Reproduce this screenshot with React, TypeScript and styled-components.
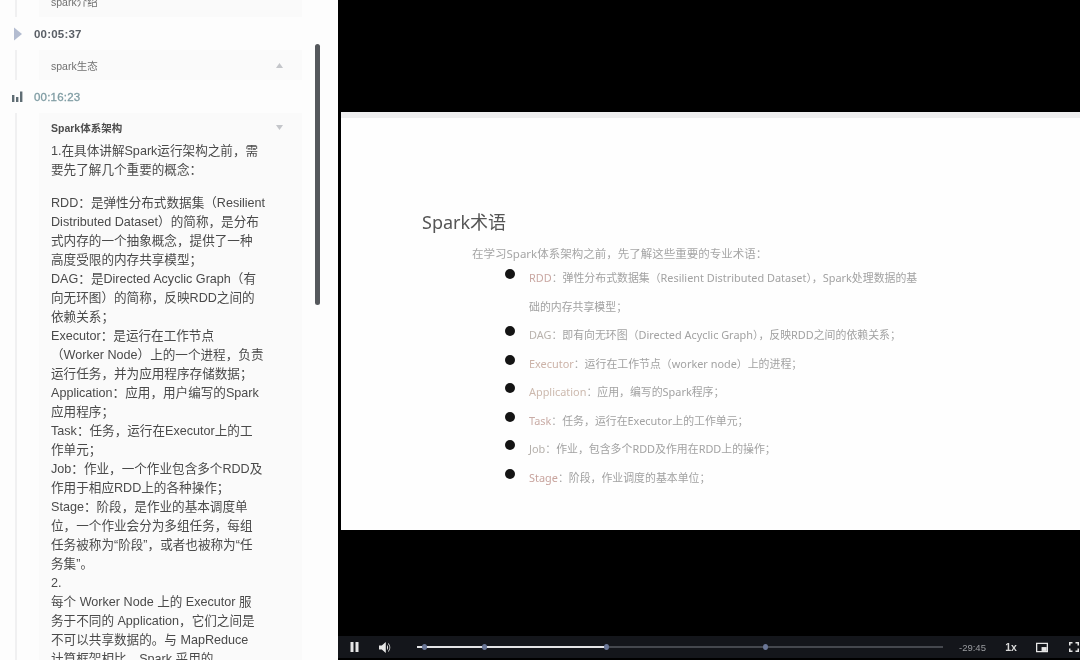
import React from 'react'
import styled, { createGlobalStyle } from 'styled-components'

const GlobalStyle = createGlobalStyle`
  html, body {
    margin: 0;
    padding: 0;
    width: 1080px;
    height: 660px;
    overflow: hidden;
    background: #fff;
  }
`

const Page = styled.div`
  display: grid;
  grid-template-columns: 338px 1fr;
  width: 1080px;
  height: 660px;
  overflow: hidden;
  filter: blur(0.45px);
  font-family: 'Liberation Sans', 'Noto Sans CJK SC', sans-serif;
`

const Sidebar = styled.aside`
  position: relative;
  height: 660px;
  overflow: hidden;
  background: #fdfdfd;
`

const Outline = styled.div`
  display: flex;
  flex-direction: column;
  margin-top: -14px;
`

const Chapter = styled.section`
  display: flex;
  flex-direction: column;
`

const TimeRow = styled.div`
  display: flex;
  align-items: center;
  height: 33px;
  padding-left: 11px;
`

const MarkerSlot = styled.span`
  display: flex;
  align-items: center;
  width: 23px;
`

const TimeText = styled.span<{ $active?: boolean }>`
  font-size: 11.5px;
  font-weight: ${p => (p.$active ? 400 : 700)};
  letter-spacing: 0.2px;
  color: ${p => (p.$active ? '#7f9ca3' : '#5a5f66')};
  -webkit-text-stroke: ${p => (p.$active ? '0.3px #7f9ca3' : '0')};
`

const Rail = styled.div`
  margin-left: 15px;
  padding-left: 22px;
  border-left: 2px solid #f0f0f1;
  width: 263px;
`

const Card = styled.div<{ $open?: boolean }>`
  background: #fafafa;
  padding: ${p => (p.$open ? '0 0 0 12px' : '0 0 0 12px')};
  width: 251px;
`

const CardHead = styled.div<{ $height: number }>`
  display: flex;
  align-items: center;
  justify-content: space-between;
  height: ${p => p.$height}px;
  padding-right: 19px;
`

const CardTitle = styled.span<{ $strong?: boolean }>`
  font-size: 10.5px;
  font-weight: ${p => (p.$strong ? 700 : 400)};
  color: ${p => (p.$strong ? '#4c4c4c' : '#707070')};
`

const Caret = styled.svg`
  width: 7px;
  height: 5px;
  fill: #c4c6ca;
`

const Notes = styled.div`
  font-size: 12.6px;
  line-height: 19px;
  color: #4a4a4a;
  white-space: nowrap;
`

const Block = styled.p`
  margin: 0 0 14px;
`

const ScrollThumb = styled.div`
  position: absolute;
  left: 315px;
  top: 44px;
  width: 5px;
  height: 261px;
  border-radius: 3px;
  background: #55585c;
`

const Player = styled.main`
  display: flex;
  flex-direction: column;
  height: 660px;
  background: #000;
`

const Letterbox = styled.div<{ $height: number }>`
  height: ${p => p.$height}px;
  flex: none;
  background: #000;
`

const Slide = styled.div`
  flex: none;
  height: 418px;
  margin: 0 2px 0 3px;
  padding: 92px 0 0 81px;
  box-sizing: border-box;
  background: #fefefe;
  border-top: 6px solid #eeeeef;
  font-family: 'Noto Sans', 'Noto Sans CJK SC', sans-serif;
`

const SlideTitle = styled.h1`
  margin: 0;
  font-size: 18px;
  line-height: 24px;
  font-weight: 400;
  color: #555;
`

const SlideIntro = styled.p`
  margin: 11px 0 0 50px;
  font-size: 11.5px;
  line-height: 18px;
  color: #a6a6a6;
`

const TermList = styled.ul`
  list-style: none;
  margin: 1px 0 0 107px;
  padding: 0;
  font-size: 10.9px;
  line-height: 28.5px;
  color: #a2a2a2;
  white-space: nowrap;
`

const Term = styled.li`
  position: relative;
  &::before {
    content: '';
    position: absolute;
    left: -24px;
    top: 5px;
    width: 10px;
    height: 10px;
    border-radius: 50%;
    background: #141414;
  }
`

const TermName = styled.span<{ $tone: string }>`
  color: ${p => p.$tone};
`

const Controls = styled.div`
  flex: none;
  display: flex;
  align-items: center;
  height: 22px;
  margin-bottom: 2px;
  padding-left: 10px;
  background: #14161b;
  color: #e8e8e8;
`

const IconSlot = styled.span<{ $width: number }>`
  display: flex;
  align-items: center;
  justify-content: center;
  flex: none;
  width: ${p => p.$width}px;
`

const ControlIcon = styled.svg`
  display: block;
  fill: #e6e6e6;
`

const Track = styled.div`
  position: relative;
  flex: none;
  width: 526px;
  height: 2px;
  margin-left: 7px;
  background: #45484e;
`

const Played = styled.div`
  height: 100%;
  background: #e4e4e6;
`

const Chapters = styled.span<{ $at: number }>`
  position: absolute;
  left: ${p => p.$at}px;
  top: -2px;
  width: 5px;
  height: 6px;
  border-radius: 50%;
  background: #6a7696;
`

const Remaining = styled.span`
  flex: none;
  margin-left: 16px;
  width: 27px;
  font-size: 9.5px;
  color: #9a9ca0;
`

const Speed = styled.span`
  flex: none;
  width: 50px;
  text-align: center;
  font-size: 10.5px;
  font-weight: 700;
  color: #d8d8d8;
`

const notes = [
  ['1.在具体讲解Spark运行架构之前，需', '要先了解几个重要的概念：'],
  [
    'RDD：是弹性分布式数据集（Resilient',
    'Distributed Dataset）的简称，是分布',
    '式内存的一个抽象概念，提供了一种',
    '高度受限的内存共享模型；',
    'DAG：是Directed Acyclic Graph（有',
    '向无环图）的简称，反映RDD之间的',
    '依赖关系；',
    'Executor：是运行在工作节点',
    '（Worker Node）上的一个进程，负责',
    '运行任务，并为应用程序存储数据；',
    'Application：应用，用户编写的Spark',
    '应用程序；',
    'Task：任务，运行在Executor上的工',
    '作单元；',
    'Job：作业，一个作业包含多个RDD及',
    '作用于相应RDD上的各种操作；',
    'Stage：阶段，是作业的基本调度单',
    '位，一个作业会分为多组任务，每组',
    '任务被称为“阶段”，或者也被称为“任',
    '务集”。',
    '2.',
    '每个 Worker Node 上的 Executor 服',
    '务于不同的 Application，它们之间是',
    '不可以共享数据的。与 MapReduce',
    '计算框架相比，Spark 采用的',
  ],
]

const terms = [
  { name: 'RDD', tone: '#c9a7a2', text: '：弹性分布式数据集（Resilient Distributed Dataset），Spark处理数据的基', more: '础的内存共享模型；' },
  { name: 'DAG', tone: '#b9b3ad', text: '：即有向无环图（Directed Acyclic Graph），反映RDD之间的依赖关系；' },
  { name: 'Executor', tone: '#ccb3a8', text: '：运行在工作节点（worker node）上的进程；' },
  { name: 'Application', tone: '#ccb9ae', text: '：应用，编写的Spark程序；' },
  { name: 'Task', tone: '#c9aca6', text: '：任务，运行在Executor上的工作单元；' },
  { name: 'Job', tone: '#b5b0ab', text: '：作业，包含多个RDD及作用在RDD上的操作；' },
  { name: 'Stage', tone: '#c8a49e', text: '：阶段，作业调度的基本单位；' },
]

const App = () => {
  return (
    <Page>
      <GlobalStyle />
      <Sidebar>
        <Outline>
          <Rail>
            <Card>
              <CardHead $height={31}>
                <CardTitle>spark介绍</CardTitle>
              </CardHead>
            </Card>
          </Rail>
          <Chapter>
            <TimeRow>
              <MarkerSlot>
                <svg width="12" height="14" viewBox="0 0 12 14">
                  <path d="M3 0.5 L11 7 L3 13.5 Z" fill="#b3bcd0" />
                </svg>
              </MarkerSlot>
              <TimeText>00:05:37</TimeText>
            </TimeRow>
            <Rail>
              <Card>
                <CardHead $height={30}>
                  <CardTitle>spark生态</CardTitle>
                  <Caret viewBox="0 0 7 5">
                    <path d="M3.5 0 L7 5 L0 5 Z" />
                  </Caret>
                </CardHead>
              </Card>
            </Rail>
          </Chapter>
          <Chapter>
            <TimeRow>
              <MarkerSlot>
                <svg width="12" height="11" viewBox="0 0 12 11">
                  <rect x="1" y="4" width="2.4" height="7" fill="#5f6d74" />
                  <rect x="5" y="6" width="2.4" height="5" fill="#5f6d74" />
                  <rect x="9" y="0.5" width="2.4" height="10.5" fill="#5f6d74" />
                </svg>
              </MarkerSlot>
              <TimeText $active>00:16:23</TimeText>
            </TimeRow>
            <Rail>
              <Card $open>
                <CardHead $height={29}>
                  <CardTitle $strong>Spark体系架构</CardTitle>
                  <Caret viewBox="0 0 7 5">
                    <path d="M0 0 L7 0 L3.5 5 Z" />
                  </Caret>
                </CardHead>
                <Notes>
                  {notes.map((block, i) => (
                    <Block key={i}>
                      {block.map((line, j) => (
                        <React.Fragment key={j}>
                          {line}
                          <br />
                        </React.Fragment>
                      ))}
                    </Block>
                  ))}
                </Notes>
              </Card>
            </Rail>
          </Chapter>
        </Outline>
        <ScrollThumb />
      </Sidebar>

      <Player>
        <Letterbox $height={112} />
        <Slide>
          <SlideTitle>Spark术语</SlideTitle>
          <SlideIntro>在学习Spark体系架构之前，先了解这些重要的专业术语：</SlideIntro>
          <TermList>
            {terms.map(t => (
              <Term key={t.name}>
                <TermName $tone={t.tone}>{t.name}</TermName>
                {t.text}
                {t.more && (
                  <>
                    <br />
                    {t.more}
                  </>
                )}
              </Term>
            ))}
          </TermList>
        </Slide>
        <Letterbox $height={106} />
        <Controls>
          <IconSlot $width={12}>
            <ControlIcon width="9" height="10" viewBox="0 0 9 10">
              <rect x="0.5" width="3" height="10" />
              <rect x="5.5" width="3" height="10" />
            </ControlIcon>
          </IconSlot>
          <IconSlot $width={50}>
            <ControlIcon width="12" height="11" viewBox="0 0 12 11">
              <path d="M0 3.5 H2.8 L6.8 0 V11 L2.8 7.5 H0 Z" />
              <path d="M8 3 C9.4 4.2 9.4 6.8 8 8 Z" />
              <path d="M9 1 C12 3 12 8 9 10 L9 9 C11 7.5 11 3.5 9 2 Z" />
            </ControlIcon>
          </IconSlot>
          <Track>
            <Played style={{ width: `${(188 / 526) * 100}%` }} />
            <Chapters $at={5} />
            <Chapters $at={65} />
            <Chapters $at={187} />
            <Chapters $at={346} />
          </Track>
          <Remaining>-29:45</Remaining>
          <Speed>1x</Speed>
          <IconSlot $width={12}>
            <ControlIcon width="14" height="11" viewBox="0 0 14 11">
              <path fillRule="evenodd" d="M0 0 H14 V11 H0 Z M1.5 1.5 V9.5 H12.5 V1.5 Z" />
              <rect x="6.5" y="5" width="6" height="4.5" />
            </ControlIcon>
          </IconSlot>
          <IconSlot $width={52}>
            <ControlIcon width="10" height="10" viewBox="0 0 10 10">
              <path d="M0 0 H3.5 V1.5 H1.5 V3.5 H0 Z M6.5 0 H10 V3.5 H8.5 V1.5 H6.5 Z M0 6.5 H1.5 V8.5 H3.5 V10 H0 Z M8.5 6.5 H10 V10 H6.5 V8.5 H8.5 Z" />
            </ControlIcon>
          </IconSlot>
        </Controls>
      </Player>
    </Page>
  )
}

export default App
